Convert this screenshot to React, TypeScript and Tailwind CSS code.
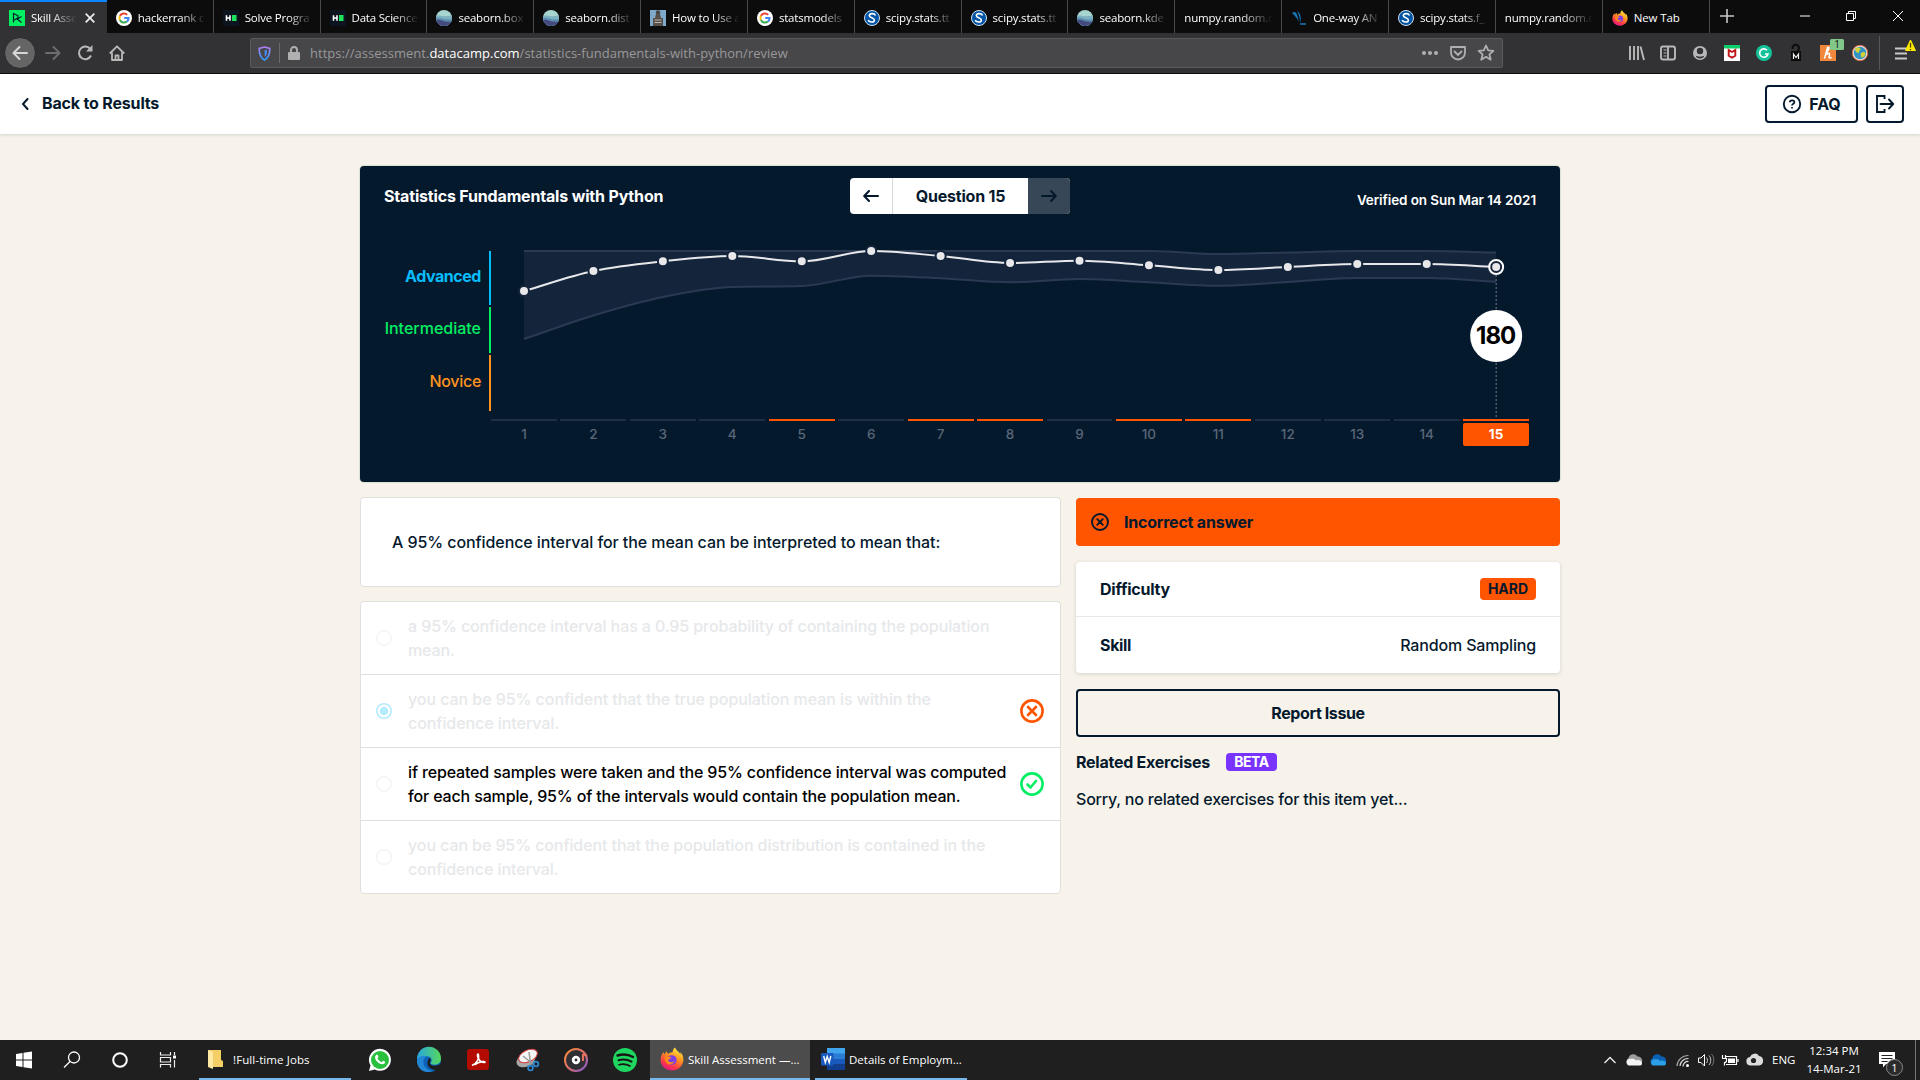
import React from "react";

type Kind = "dc" | "google" | "hr" | "seaborn" | "statue" | "scipy" | "wave" | "firefox" | "none";

const TABS: { icon: Kind; label: string }[] = [
  { icon: "dc", label: "Skill Asse" },
  { icon: "google", label: "hackerrank c" },
  { icon: "hr", label: "Solve Progra" },
  { icon: "hr", label: "Data Science" },
  { icon: "seaborn", label: "seaborn.box" },
  { icon: "seaborn", label: "seaborn.dist" },
  { icon: "statue", label: "How to Use a" },
  { icon: "google", label: "statsmodels" },
  { icon: "scipy", label: "scipy.stats.tt" },
  { icon: "scipy", label: "scipy.stats.tt" },
  { icon: "seaborn", label: "seaborn.kde" },
  { icon: "none", label: "numpy.random.c" },
  { icon: "wave", label: "One-way AN" },
  { icon: "scipy", label: "scipy.stats.f_" },
  { icon: "none", label: "numpy.random.c" },
  { icon: "firefox", label: "New Tab" },
];

function Firefox({ className }: { className: string }) {
  return (
    <svg viewBox="0 0 24 24" className={className}>
      <defs>
        <linearGradient id="ffBody" x1="0.8" y1="0" x2="0.3" y2="1">
          <stop offset="0" stopColor="#fff14a" />
          <stop offset="0.4" stopColor="#ff9a1f" />
          <stop offset="0.75" stopColor="#ff3b47" />
          <stop offset="1" stopColor="#e31587" />
        </linearGradient>
      </defs>
      <path d="M15 .5c-1.6 1.4-2.4 3-2.3 4.8C10.500 5.200 9 6 8.200 7 7.500 6.600 7 5.600 7 4.300 5.800 5 5 6 4.500 7.300 4 6.900 3.600 6 3.500 5 1.600 7.300.6 10 .6 13 .6 19 5.700 23.500 12 23.500S23.400 18.700 23.400 12.500c0-3.500-1.500-6-3.200-7.500.3 1 .4 1.800.3 2.500C19.400 5 16.500 3.800 15 .5z" fill="url(#ffBody)" />
      <circle cx="11.800" cy="13" r="4.800" fill="#7a3fe6" />
      <path d="M5 10.500c2-1.500 4.500-1.300 6.500.3-1.200 1.200-3 1-3.500 2.500 1 2.500 4.500 2.500 6.500 1-1.500 4-7 4.500-9.200 0-.6-1.300-.7-2.500-.3-3.800z" fill="#ff8a16" />
    </svg>
  );
}

function Favicon({ kind }: { kind: Kind }) {
  switch (kind) {
    case "dc":
      return (
        <svg viewBox="0 0 16 16" className="h-4 w-4 shrink-0">
          <rect width="16" height="16" fill="#03ef62" />
          <path d="M4.500 12.500v-9l4.500 2.300v2L4.500 10.500M12.500 6.500L8.200 9l4.300 3.500" fill="none" stroke="#05192d" strokeWidth="1.100" />
        </svg>
      );
    case "google":
      return (
        <svg viewBox="0 0 16 16" className="h-4 w-4 shrink-0">
          <circle cx="8" cy="8" r="8" fill="#fff" />
          <g fill="none" strokeWidth="2">
            <path d="M11.200 4.700A4.600 4.600 0 0 0 3.900 6" stroke="#ea4335" />
            <path d="M3.900 6a4.600 4.600 0 0 0 0 4" stroke="#fbbc05" />
            <path d="M3.900 10a4.600 4.600 0 0 0 7 1.500" stroke="#34a853" />
            <path d="M10.900 11.500A4.500 4.500 0 0 0 12.600 8.100H8.200" stroke="#4285f4" />
          </g>
        </svg>
      );
    case "hr":
      return (
        <svg viewBox="0 0 16 16" className="h-4 w-4 shrink-0">
          <rect width="16" height="16" fill="#0c1420" />
          <path d="M3.500 5.200v5.600M7 5.200v5.600M3.500 8H7" stroke="#fff" strokeWidth="1.600" />
          <rect x="9" y="5" width="4.500" height="6" fill="#1ce25c" />
        </svg>
      );
    case "seaborn":
      return (
        <svg viewBox="0 0 16 16" className="h-4 w-4 shrink-0">
          <defs>
            <clipPath id="seaClip"><circle cx="8" cy="8" r="8" /></clipPath>
          </defs>
          <g clipPath="url(#seaClip)">
            <rect width="16" height="16" fill="#a9d5d0" />
            <path d="M0 6c4-2 8 2 16-1v11H0z" fill="#7db0c0" />
            <path d="M0 8c4-1 8 3 16 1v7H0z" fill="#5b8db0" />
            <path d="M0 10c5-1 8 3 16 1.500V16H0z" fill="#444a7e" />
          </g>
        </svg>
      );
    case "statue":
      return (
        <svg viewBox="0 0 16 16" className="h-4 w-4 shrink-0">
          <rect width="16" height="16" fill="#7ea9cb" />
          <circle cx="8" cy="2.500" r="2.200" fill="#4a4540" />
          <path d="M6 4h4l1 4h2v8H3V8h2z" fill="#57504a" />
          <path d="M4.500 10h7M4.500 12.500h7" stroke="#b9b2a8" />
        </svg>
      );
    case "scipy":
      return (
        <svg viewBox="0 0 16 16" className="h-4 w-4 shrink-0">
          <circle cx="8" cy="8" r="7.500" fill="#0054a6" stroke="#d5dfec" />
          <path d="M11.500 5.500C10.500 3 5.500 3 5.300 5.500 5.200 8 10.500 7.500 10.400 10.200 10.200 12.800 5.500 12.500 4 10.300" fill="none" stroke="#fff" strokeWidth="1.600" />
        </svg>
      );
    case "wave":
      return (
        <svg viewBox="0 0 16 16" className="h-4 w-4 shrink-0">
          <path d="M1 3c4-3 5 0 7 9-2-4-4-6-7-9zM6 1c4 2 4 7 3.500 12C8.500 8 8 4 6 1z" fill="#1677b9" />
          <path d="M9 14h6" stroke="#1677b9" strokeWidth="1.500" />
        </svg>
      );
    case "firefox":
      return <Firefox className="h-4 w-4 shrink-0" />;
    default:
      return null;
  }
}

function TabStrip() {
  return (
    <div className="flex h-[33px] bg-[#0c0c0d]">
      <div className="grid w-[1709.500px] shrink-0 grid-cols-16">
        {TABS.map((t, i) => (
          <div
            key={i}
            className={
              i === 0
                ? "flex min-w-0 items-center gap-1.5 border-t-2 border-[#0a84ff] bg-[#323234] pr-3 pl-[9px]"
                : "flex min-w-0 items-center gap-1.5 border-r border-[#4a4a4c] pt-0.5 pr-1 pl-[9px]"
            }
          >
            <Favicon kind={t.icon} />
            <span
              className={
                i === 15
                  ? "flex-1 text-[11.500px] tracking-[-0.1px] whitespace-nowrap"
                  : i === 0
                    ? "flex-1 mask-r-from-40% mask-r-to-95% text-[11.500px] tracking-[-0.25px] whitespace-nowrap"
                    : "flex-1 mask-r-from-60% mask-r-to-95% text-[11.500px] tracking-[-0.2px] whitespace-nowrap"
              }
            >
              {t.label}
            </span>
            {i === 0 && (
              <svg viewBox="0 0 10 10" className="h-2.5 w-2.5 shrink-0">
                <path d="M.7.7l8.600 8.600M9.300.7L.7 9.300" stroke="#eee" strokeWidth="1.700" />
              </svg>
            )}
          </div>
        ))}
      </div>
      <svg viewBox="0 0 210 33" className="h-[33px] w-[210px]" fill="none">
        <path d="M10 16h14M17 9v14" stroke="#c8c8c8" strokeWidth="1.600" />
        <path d="M90 16h10" stroke="#fff" />
        <path d="M136.500 13.500h7v7h-7zM138.500 13.500v-2h7v7h-2" stroke="#fff" />
        <path d="M183 11l10 10M193 11l-10 10" stroke="#fff" />
      </svg>
    </div>
  );
}

function Toolbar() {
  return (
    <div className="flex h-[41px] items-center border-b border-[#0c0c0d] bg-[#323234] text-[#b8b8b9]">
      <div className="ml-1 flex h-8 w-8 items-center justify-center rounded-full border border-[#29292b] bg-[#656566]">
        <svg viewBox="0 0 16 16" className="h-4 w-4" fill="none" stroke="#d6d6d6" strokeWidth="2" strokeLinecap="round" strokeLinejoin="round">
          <path d="M15 8H1.500M7.500 2l-6 6 6 6" />
        </svg>
      </div>
      <svg viewBox="0 0 16 16" className="ml-[9px] h-4 w-4" fill="none" stroke="#6d6d6f" strokeWidth="2" strokeLinecap="round" strokeLinejoin="round">
        <path d="M1 8h13.500M8.500 2l6 6-6 6" />
      </svg>
      <svg viewBox="0 0 16 16" className="ml-4 h-4 w-4" fill="none" stroke="currentColor" strokeWidth="2">
        <path d="M13.500 4.300A6.300 6.300 0 1 0 14 10.500" />
        <path d="M15.500 0v6.500H9z" fill="currentColor" stroke="none" />
      </svg>
      <svg viewBox="0 0 16 16" className="ml-4 h-4 w-4" fill="none" stroke="currentColor" strokeWidth="1.800" strokeLinejoin="round">
        <path d="M.8 8.500L8 1.300l7.200 7.200M3 7.500V15h10V7.500" />
        <path d="M6.500 15v-4.500h3V15" />
      </svg>
      <div className="ml-[125px] flex h-[30px] w-[1253px] items-center rounded-[2px] border border-[#5a5a5c] bg-[#474749]">
        <svg viewBox="0 0 14 16" className="ml-[7px] h-[15px] w-[13px]" fill="none">
          <defs>
            <linearGradient id="shield" x1="0" y1="0" x2="0" y2="1">
              <stop offset="0" stopColor="#b07cf5" />
              <stop offset="1" stopColor="#2b9cff" />
            </linearGradient>
          </defs>
          <path d="M7 1l5.700 1.600C12.800 8 11.500 12.500 7 15 2.500 12.500 1.200 8 1.300 2.600z" stroke="url(#shield)" strokeWidth="1.800" />
          <path d="M7.200 4v7.700c1.800-1.600 2.500-3.900 2.600-7z" fill="#4a8dff" />
        </svg>
        <div className="ml-2 h-5 w-px bg-[#6a6a6c]" />
        <svg viewBox="0 0 12 14" className="ml-2 h-3.5 w-3" fill="none">
          <rect y="6" width="12" height="8" rx="1" fill="#b0b0b1" />
          <path d="M3 6.500V4a3 3 0 0 1 6 0v2.500" stroke="#b0b0b1" strokeWidth="1.900" />
        </svg>
        <span className="ml-2.5 pt-0.5 text-[13px] tracking-[0.02px] text-[#98989a]">
          https://assessment.<span className="text-white">datacamp.com</span>/statistics-fundamentals-with-python/review
        </span>
        <svg viewBox="0 0 80 20" className="mr-0.5 ml-auto h-5 w-20" fill="none" stroke="#b0b0b1" strokeWidth="1.800">
          <g fill="#b0b0b1" stroke="none">
            <circle cx="4" cy="10" r="2" />
            <circle cx="10" cy="10" r="2" />
            <circle cx="16" cy="10" r="2" />
          </g>
          <path d="M31 4h14v5.500a7 7 0 0 1-14 0z" strokeLinejoin="round" />
          <path d="M34.500 8.500L38 12l3.500-3.500" strokeLinecap="round" />
          <path d="M66 2.500l2.200 4.900 5.200.5-4 3.500 1.300 5.300-4.700-2.900-4.700 2.900 1.300-5.300-4-3.500 5.200-.5z" strokeLinejoin="round" />
        </svg>
      </div>
      <Extensions />
    </div>
  );
}

function Extensions() {
  return (
    <svg viewBox="1503 33 416 40" className="h-10 w-[416px] shrink-0" fill="none">
      <g stroke="#b8b8b9" strokeWidth="1.900">
        <path d="M1630 46v14M1634 46v14M1638 46v14M1640.500 46.500l3.500 13.500" />
        <rect x="1661" y="46.500" width="14" height="13" rx="2" />
        <path d="M1668 46v14" />
        <path d="M1663.500 50h3M1663.500 53h3M1663.500 56h3" strokeWidth="1" />
      </g>
      <circle cx="1700" cy="53" r="7" fill="#b8b8b9" />
      <circle cx="1700" cy="51" r="3.200" fill="#323234" />
      <path d="M1695.500 55.500c1.200 1.500 7.800 1.500 9 0-1 4-8 4-9 0z" fill="#323234" />
      <rect x="1724" y="45" width="16" height="16" fill="#fff" />
      <rect x="1724" y="45" width="16" height="3.500" fill="#0fcf6b" />
      <path d="M1728.700 50l3.300 2 3.300-2v5.800l-3.300 1.800-3.300-1.800z" stroke="#c01818" strokeWidth="1.900" />
      <circle cx="1764" cy="53" r="8" fill="#15c39a" />
      <path d="M1767 50.200a4.200 4.200 0 1 0 1 3.800h-3" stroke="#fff" strokeWidth="1.600" />
      <path d="M1792.500 49v-1a3 3 0 0 1 6.500 0c0 2-1.500 2-1.500 4" stroke="#0b0b0b" strokeWidth="1.800" />
      <rect x="1791" y="51" width="10" height="10" fill="#0b0b0b" />
      <path d="M1793.500 59v-5l2.500 3.500 2.500-3.500v5" stroke="#eee" strokeWidth="1.200" />
      <rect x="1820" y="45" width="16" height="16" fill="#f0873a" />
      <path d="M1824.500 58.500l3-11c1.500-.5 2 .5 1 2l-3 5M1826 55c2-2.500 4-2.500 3.500 0l-.5 2.500c.5 1 2 .5 2.500-.5" stroke="#fff" strokeWidth="1.500" />
      <rect x="1830" y="39" width="14" height="11" rx="1.500" fill="#80c788" />
      <text x="1837" y="48" textAnchor="middle" fontSize="10" fill="#111">1</text>
      <circle cx="1860" cy="53" r="7" fill="#3493c5" stroke="#f0ead9" strokeWidth="1.500" />
      <circle cx="1860" cy="53" r="7.700" stroke="#d9603c" strokeWidth="0.900" />
      <path d="M1855 49c2-2 5-2 5.500 0-.5 2-2 1.500-1.500 4-2 0-4-1.500-4-4zM1861 53c2-2 5-1 4.500 1-.8 2.500-3 4-4 3.500-.8-1.500-1-3-.5-4.500z" fill="#d2d334" />
      <path d="M1879.500 36v34" stroke="#57575a" />
      <path d="M1895 48.500h12M1895 53.500h12M1895 58.500h12" stroke="#c8c8c9" strokeWidth="1.900" />
      <path d="M1910.500 40l5 10.500h-10z" fill="#ffe900" stroke="#ffe900" strokeLinejoin="round" />
      <path d="M1910.500 43v4.500M1910.500 49v1.300" stroke="#4a4200" strokeWidth="1.300" />
    </svg>
  );
}

function PageHeader() {
  return (
    <div className="flex h-[60px] items-center bg-white pr-4 pl-[21px] shadow-[0_1px_3px_rgba(5,25,45,0.15)]">
      <svg viewBox="0 0 8 12" className="h-3 w-2" fill="none" stroke="#05192d" strokeWidth="2" strokeLinecap="round">
        <path d="M6.500 1L2 6l4.500 5" />
      </svg>
      <span className="ml-[13px] pb-0.5 text-base font-bold tracking-[-0.17px]">Back to Results</span>
      <div className="ml-auto flex h-[38px] w-[93px] items-center justify-center gap-[7px] rounded border-2 border-[#05192d]">
        <svg viewBox="0 0 20 20" className="h-5 w-5 shrink-0" fill="none" stroke="#05192d" strokeWidth="1.900">
          <circle cx="10" cy="10" r="8.200" />
          <path d="M7.800 8.300c0-2.700 4.600-2.700 4.600 0C12.400 9.800 10 9.800 10 11.500M10 13v1.600" strokeWidth="1.700" />
        </svg>
        <span className="text-base font-bold tracking-[-0.1px]">FAQ</span>
      </div>
      <div className="ml-2 flex h-[38px] w-[38px] items-center justify-center rounded border-2 border-[#05192d]">
        <svg viewBox="0 0 20 20" className="h-5 w-5" fill="none" stroke="#05192d" strokeWidth="1.900">
          <path d="M9.500 5V2H2v16h7.500v-3" />
          <path d="M5.500 10H18M14 5.500l4.200 4.500L14 14.500" strokeLinecap="round" strokeLinejoin="round" />
        </svg>
      </div>
    </div>
  );
}

const STEP = 69.44;
const X0 = 164;
const SCORE = [291, 271, 261.3, 256, 261.3, 251, 256, 263, 260.7, 265.3, 270, 267, 264, 264, 267];
const LOWER = [339, 315.5, 297, 287, 286, 275.7, 278.3, 282.3, 279, 282.3, 285.7, 282, 278, 278, 281.7];
const UPPER = [251, 251, 251, 251, 251, 251, 251, 251, 251, 251, 254, 252.5, 251, 251, 252.5];
const WRONG = [5, 7, 8, 10, 11, 15];

const px = (i: number) => X0 + i * STEP;

/* Monotone cubic curve through evenly spaced values. */
function curve(v: number[]) {
  const s = v.slice(1).map((y, i) => (y - v[i]) / STEP);
  const m = v.map((_, i) => {
    if (i === 0) return s[0];
    if (i === v.length - 1) return s[i - 1];
    const a = s[i - 1];
    const b = s[i];
    if (a * b <= 0) return 0;
    return Math.sign(a) * Math.min(Math.abs(a), Math.abs(b), Math.abs(a + b) / 4) * 2;
  });
  let d = `M${px(0)} ${v[0]}`;
  for (let i = 1; i < v.length; i++) {
    const k = STEP / 3;
    d += `C${px(i - 1) + k} ${v[i - 1] + m[i - 1] * k} ${px(i) - k} ${v[i] - m[i] * k} ${px(i)} ${v[i]}`;
  }
  return d;
}

function Band() {
  const up = curve(UPPER);
  const low = curve(LOWER);
  return (
    <svg viewBox="131 240 1069 180" className="h-[180px] w-[1069px] shrink-0" fill="none">
      <defs>
        <mask id="belowLower">
          <rect x="0" y="240" width="1200" height="180" fill="#fff" />
          <path d={low + `V420H${px(0)}Z`} fill="#000" />
        </mask>
      </defs>
      <path d={up + `V345H${px(0)}Z`} fill="#14253b" mask="url(#belowLower)" />
      <path d={up} stroke="#2b3a52" strokeWidth="2" />
      <path d={low} stroke="#2b3a52" strokeWidth="2" />
      <path d={`M${px(14)} 275V420`} stroke="#6f7b89" strokeDasharray="2 2" />
      <path d={curve(SCORE)} stroke="#e8e8ea" strokeWidth="2" />
      {SCORE.map((y, i) => (
        <circle key={i} cx={px(i)} cy={y} r="5" fill="#e8e8ea" stroke="#14253b" strokeWidth="2" />
      ))}
      <circle cx={px(14)} cy={267} r="7" stroke="#fff" strokeWidth="2" />
      <circle cx={px(14)} cy={336} r="26" fill="#fff" />
      <text x={px(14) - 0.5} y="344" textAnchor="middle" fontSize="24" fontWeight="700" fill="#000" letterSpacing="-1" fontFamily="Inter">180</text>
    </svg>
  );
}

function ChartPanel() {
  return (
    <div className="h-[316px] rounded bg-[#05192d] text-white shadow-[0_0_1px_1px_rgba(5,80,60,0.12)]">
      <div className="grid h-[74px] grid-cols-3 items-start px-6 pt-3">
        <span className="pt-1.5 text-base font-bold tracking-[-0.17px] whitespace-nowrap">Statistics Fundamentals with Python</span>
        <div className="flex h-9 w-[220px] justify-self-center overflow-hidden rounded bg-white text-[#05192d]">
          <div className="flex w-[43px] items-center justify-center border-r border-[#d5d9dd]">
            <svg viewBox="0 0 16 12" className="h-3 w-4" fill="none" stroke="#05192d" strokeWidth="2" strokeLinecap="round" strokeLinejoin="round">
              <path d="M15 6H1.500M6 1L1.200 6 6 11" />
            </svg>
          </div>
          <div className="flex flex-1 items-center justify-center text-base font-bold tracking-[-0.22px]">Question 15</div>
          <div className="flex w-[42px] items-center justify-center bg-[#374757]">
            <svg viewBox="0 0 16 12" className="h-3 w-4" fill="none" stroke="#05192d" strokeWidth="2" strokeLinecap="round" strokeLinejoin="round">
              <path d="M1 6h13.500M10 1l4.800 5L10 11" />
            </svg>
          </div>
        </div>
        <span className="justify-self-end pt-3 text-[13.500px] font-semibold tracking-[-0.1px]">Verified on Sun Mar 14 2021</span>
      </div>
      <div className="flex h-[180px]">
        <div className="flex w-[131px] flex-col gap-0.5 pt-[11px] text-right">
          <div className="flex h-[54px] items-center justify-end border-r-2 border-[#06bdfc] pr-2 pb-1 text-base font-bold tracking-[-0.45px] text-[#06bdfc]">Advanced</div>
          <div className="flex h-[46px] items-center justify-end border-r-2 border-[#03ef62] pr-2 pb-1 text-base font-medium tracking-[0px] text-[#03ef62]">Intermediate</div>
          <div className="flex h-[56px] items-center justify-end border-r-2 border-[#ff931e] pr-2 pb-1 text-base font-medium tracking-[-0.3px] text-[#ff931e]">Novice</div>
        </div>
        <Band />
      </div>
      <div className="-mt-px ml-[131px] flex w-[1041.600px]">
        {SCORE.map((_, i) => {
          const n = i + 1;
          return (
            <div key={n} className="flex flex-1 flex-col gap-0.5 pr-[3.500px]">
              <div className={WRONG.includes(n) ? "h-0.5 bg-[#ff5400]" : "h-0.5 bg-[#1f2f43]"} />
              <div
                className={
                  n === 15
                    ? "flex h-[23px] items-center justify-center rounded-xs bg-[#ff5400] pb-px text-[13.500px] font-bold text-white"
                    : "flex h-[23px] items-center justify-center pb-px text-[13.500px] font-medium text-[#596778]"
                }
              >
                {n}
              </div>
            </div>
          );
        })}
      </div>
    </div>
  );
}

type Option = { lines: [string, string]; state: "plain" | "wrong" | "right"; faded: boolean; track: string };
const OPTIONS: Option[] = [
  { lines: ["a 95% confidence interval has a 0.95 probability of containing the population", "mean."], state: "plain", faded: true, track: "tracking-[-0.1px]" },
  { lines: ["you can be 95% confident that the true population mean is within the", "confidence interval."], state: "wrong", faded: true, track: "tracking-[-0.06px]" },
  { lines: ["if repeated samples were taken and the 95% confidence interval was computed", "for each sample, 95% of the intervals would contain the population mean."], state: "right", faded: false, track: "tracking-[-0.15px]" },
  { lines: ["you can be 95% confident that the population distribution is contained in the", "confidence interval."], state: "plain", faded: true, track: "tracking-[-0.09px]" },
];

function OptionRow({ o }: { o: Option }) {
  return (
    <div className="flex h-[73px] items-center border-b border-[#dfdfdc] pl-[15px] last:h-[72px] last:border-b-0">
      <svg viewBox="0 0 16 16" className="h-4 w-4 shrink-0" fill="none">
        {o.state === "wrong" ? (
          <>
            <circle cx="8" cy="8" r="7.200" stroke="#b4ebfe" strokeWidth="1.600" />
            <circle cx="8" cy="8" r="4.300" fill="#b4ebfe" />
          </>
        ) : (
          <circle cx="8" cy="8" r="7.300" stroke="#f3f3f4" strokeWidth="1.400" />
        )}
      </svg>
      <div className={`ml-4 w-[610px] shrink-0 leading-6 whitespace-nowrap ${o.track} ${o.faded ? "font-medium text-[#e6e8ea]" : "font-medium text-black"}`}>
        <div>{o.lines[0]}</div>
        <div>{o.lines[1]}</div>
      </div>
      {o.state !== "plain" && (
        <svg viewBox="0 0 24 24" className="ml-0.5 h-6 w-6" fill="none" stroke={o.state === "wrong" ? "#ff5400" : "#03ef62"} strokeWidth="2.600" strokeLinecap="round" strokeLinejoin="round">
          <circle cx="12" cy="12" r="10.600" />
          {o.state === "wrong" ? <path d="M8 8l8 8M16 8l-8 8" /> : <path d="M7.500 12.500l3 3 5.500-6.500" />}
        </svg>
      )}
    </div>
  );
}

function Sidebar() {
  return (
    <div className="flex w-[484px] flex-col">
      <div className="mt-px flex h-12 items-center rounded bg-[#ff5400] pl-[15px]">
        <svg viewBox="0 0 18 18" className="h-[18px] w-[18px]" fill="none" stroke="#05192d" strokeWidth="1.900" strokeLinecap="round">
          <circle cx="9" cy="9" r="8" />
          <path d="M6.200 6.200l5.600 5.600M11.800 6.200l-5.600 5.600" />
        </svg>
        <span className="ml-[15px] font-bold tracking-[-0.22px]">Incorrect answer</span>
      </div>
      <div className="mt-4 h-[111px] rounded bg-white shadow-[0_1px_4px_rgba(5,25,45,0.15)]">
        <div className="flex h-[55px] items-center justify-between border-b border-[#e6e8ea] px-6">
          <span className="font-bold tracking-[-0.22px]">Difficulty</span>
          <span className="flex h-[22px] w-14 items-center justify-center rounded bg-[#ff5400] text-sm font-bold">HARD</span>
        </div>
        <div className="flex h-14 items-center justify-between px-6">
          <span className="font-bold tracking-[-0.35px]">Skill</span>
          <span className="font-medium tracking-[-0.16px]">Random Sampling</span>
        </div>
      </div>
      <div className="mt-4 flex h-12 items-center justify-center rounded border-2 border-[#05192d] font-bold tracking-[-0.4px]">Report Issue</div>
      <div className="mt-3 flex h-[26px] items-center">
        <span className="w-[150px] font-bold tracking-[-0.25px]">Related Exercises</span>
        <span className="flex h-[18px] w-[51px] items-center justify-center rounded bg-[#7933ff] text-sm font-bold tracking-[-0.5px] text-white">BETA</span>
      </div>
      <div className="mt-3 font-medium tracking-[-0.21px]">Sorry, no related exercises for this item yet...</div>
    </div>
  );
}

function AppIcons() {
  return (
    <svg viewBox="356 1040 294 40" className="h-10 w-[294px] shrink-0" fill="none">
      <defs>
        <linearGradient id="edgeTop" x1="0" y1="0" x2="1" y2="0">
          <stop offset="0" stopColor="#2ba7df" />
          <stop offset="1" stopColor="#55d85b" />
        </linearGradient>
        <linearGradient id="groove" x1="0" y1="0" x2="1" y2="1">
          <stop offset="0" stopColor="#f58a3a" />
          <stop offset="0.500" stopColor="#e0706a" />
          <stop offset="1" stopColor="#8058d8" />
        </linearGradient>
      </defs>
      <path d="M369 1071l1.500-5.500a11 11 0 1 1 4.200 4z" fill="#fff" />
      <circle cx="380" cy="1060" r="9" fill="#28c03d" />
      <path d="M376 1055c1.500-1.500 2 .5 2.500 2l-1 1.500c1 2 2.500 3 4 3.700l1.500-1.500c1.500.5 3 1 1.800 2.500-1.300 1.500-3.500 1.300-5.800 0-2.500-1.700-5.500-5.300-3-8.200z" fill="#fff" />
      <circle cx="429" cy="1060" r="12" fill="#0c62b8" />
      <path d="M417 1059a12 12 0 0 1 24-.5c.2 4.500-4 7-8.500 6-2-.7-2.500-1.500-1.500-2.500 1.500-2 .5-5-3-5.500-4-.5-8 .5-11 2.500z" fill="url(#edgeTop)" />
      <path d="M417 1060c2-4 7-5 10-3.500-4 1-5 7-1.500 11 2 2.500 5 3.500 7.500 3.500-8 3.500-16.500-2-16-11z" fill="#2387d6" />
      <path d="M429.500 1058c1.500.8 1.800 2.500.6 4-1 1.800 1 3.500 4 3.700 3 .1 5.500-.8 8-3.200l1 4.500-3.500 2.500c-1 .5-3 .8-5.500.3-6-.8-9-7-4.600-11.800z" fill="#1e1e1e" />
      <rect x="467" y="1049" width="22" height="21" rx="3" fill="#b30b00" />
      <path d="M472 1065.500c5-2 8-8 6-11.500-1.800.5 1 9 6.500 8.500 2.500-1.500-5-1.500-10 2.300" stroke="#fff" strokeWidth="1.600" />
      <ellipse cx="526" cy="1060" rx="10" ry="6.500" transform="rotate(-25 526 1060)" fill="#a7a7a7" />
      <ellipse cx="528" cy="1056" rx="10" ry="5.800" transform="rotate(-25 528 1056)" fill="#f5f5f5" stroke="#d23c3c" />
      <path d="M523 1056l11 9M529 1052l2 14" stroke="#999" strokeWidth="1.500" />
      <circle cx="530.500" cy="1068" r="2.400" stroke="#2b86cf" strokeWidth="1.700" />
      <circle cx="536" cy="1064" r="2.400" stroke="#2b86cf" strokeWidth="1.700" />
      <circle cx="576" cy="1060" r="11" stroke="url(#groove)" strokeWidth="2" fill="#303034" />
      <circle cx="576" cy="1060" r="2.800" stroke="#fff" strokeWidth="2.800" />
      <path d="M583 1054v7M583 1054l4 2" stroke="#e8705a" strokeWidth="2" />
      <circle cx="625" cy="1060" r="12" fill="#1ed760" />
      <g stroke="#191414" strokeLinecap="round">
        <path d="M617.500 1055.500c5-1.500 11-1 15.500 1.500" strokeWidth="2.400" />
        <path d="M618.500 1060.300c4.500-1.300 9-.8 13 1.300" strokeWidth="2" />
        <path d="M619 1064.700c4-1 7.500-.6 11 1.200" strokeWidth="1.700" />
      </g>
    </svg>
  );
}

function Tray() {
  return (
    <svg viewBox="1600 1040 170 40" className="h-10 w-[170px] shrink-0" fill="none">
      <path d="M1604.500 1063l5.500-5.500 5.500 5.500" stroke="#eee" strokeWidth="1.300" />
      <g transform="translate(-1.500 0)">
        <path d="M1630 1065a4 4 0 0 1 0-7 5 5 0 0 1 9-1.500 4 4 0 0 1 1 8.500z" fill="#9b9b9b" />
        <path d="M1630 1065.500a3.500 3.500 0 0 1 .5-6.500c3 0 4.500-1 7 1.500 2-1 6 0 6 2.500s-1.500 2.500-2.500 2.500z" fill="#f3f3f3" />
        <path d="M1654 1065a4 4 0 0 1 0-7 5 5 0 0 1 9-1.500 4 4 0 0 1 1 8.500z" fill="#0b62b5" />
        <path d="M1654 1065.500a3.500 3.500 0 0 1 .5-6c3 0 4.500-1 7 1.500 2-1 6 0 6 2.200s-1.500 2.300-2.500 2.300z" fill="#2c9fe8" />
      </g>
      <path d="M1677 1066a11 11 0 0 1 11.500-10.500" stroke="#aaa" strokeWidth="1.200" />
      <path d="M1680 1066a8 8 0 0 1 8.500-7.500M1683 1066.500a5 5 0 0 1 5.500-5" stroke="#ddd" strokeWidth="1.200" />
      <circle cx="1687.500" cy="1065.500" r="1.500" fill="#fff" />
      <path d="M1698.500 1058h2.500l3.500-3.500v11.500l-3.500-3.500h-2.500z" stroke="#fff" />
      <path d="M1706.500 1057.500c1.300 1.500 1.300 4 0 5.500M1709 1055.500c2.300 2.500 2.300 7 0 9.500" stroke="#ccc" />
      <path d="M1711.500 1054c3 3.500 3 9 0 12" stroke="#777" />
      <path d="M1726 1056.500h10.500v8H1726M1738 1059v3M1722.500 1055v3M1725.500 1055v3M1722 1058.500h4.500v2c0 2-2 2-2 2v3" stroke="#fff" strokeWidth="1.200" />
      <rect x="1728" y="1058.500" width="7" height="4.500" fill="#fff" />
      <path d="M1750 1065.500a4.300 4.300 0 0 1 0-8.500 5 5 0 0 1 9-1 4.800 4.800 0 0 1 0 9.500z" fill="#dcdcdc" />
      <circle cx="1753.500" cy="1060.500" r="2.600" fill="#222" />
    </svg>
  );
}

function Taskbar() {
  return (
    <div className="flex h-10 bg-[#1f1f1f] text-[11.500px] text-white">
      <svg viewBox="0 0 199 40" className="h-10 w-[199px] shrink-0" fill="none">
        <path d="M16 14l6.500-1v6.500H16zM23.500 12.800l8.500-1.200v7.900h-8.500zM16 20.500h6.500V27L16 26zM23.500 20.500H32v7.900l-8.500-1.200z" fill="#fff" />
        <circle cx="74" cy="17.500" r="5.500" stroke="#fff" strokeWidth="1.300" />
        <path d="M70 21.500l-6 6" stroke="#fff" strokeWidth="1.300" />
        <circle cx="120" cy="20" r="6.800" stroke="#fff" strokeWidth="2" />
        <path d="M160.500 12v3h10v-3M160.500 27.500v-3h10v3M160.500 17.500h10v4.500h-10zM174.500 12v3M174.500 20v7.500" stroke="#eee" strokeWidth="1.200" />
        <rect x="173" y="15.500" width="3" height="3" fill="#fff" />
      </svg>
      <div className="flex w-[152px] items-center border-b-2 border-[#76b9ed] pl-[9px]">
        <svg viewBox="0 0 15 20" className="h-5 w-[15px]">
          <path d="M0 1h13v10l2 1v6H0z" fill="#f4cf66" />
          <path d="M0 1l5 2v17l-5-2z" fill="#ffe9a2" />
        </svg>
        <span className="ml-2.5 pt-0.5 tracking-[0.1px]">!Full-time Jobs</span>
      </div>
      <div className="w-[5px]" />
      <AppIcons />
      <div className="flex w-40 items-center border-b-2 border-[#76b9ed] bg-[#4c4c4c] pl-2.5">
        <Firefox className="h-6 w-6 shrink-0" />
        <span className="ml-1 pt-0.5 whitespace-nowrap">Skill Assessment —...</span>
      </div>
      <div className="ml-[5px] flex w-[152px] items-center border-b-2 border-[#76b9ed] pl-1.5">
        <svg viewBox="0 0 24 22" className="h-[22px] w-6 shrink-0" fill="none">
          <rect x="6" width="18" height="6" fill="#41a5ee" />
          <rect x="6" y="5.500" width="18" height="5.500" fill="#2b7cd3" />
          <rect x="6" y="11" width="18" height="5.500" fill="#185abd" />
          <rect x="6" y="16.500" width="18" height="5.500" fill="#103f91" />
          <rect y="5" width="12.500" height="12.500" rx="1" fill="#185abd" />
          <path d="M2.700 8l1.600 6.500L6.200 8.500l2 6L9.800 8" stroke="#fff" strokeWidth="1.400" />
        </svg>
        <span className="ml-1 pt-0.5 whitespace-nowrap">Details of Employm...</span>
      </div>
      <div className="ml-auto flex">
        <Tray />
        <span className="w-[30px] self-center pl-0.5">ENG</span>
        <div className="flex w-[68px] flex-col items-center justify-center leading-[18px]">
          <span>12:34 PM</span>
          <span>14-Mar-21</span>
        </div>
        <svg viewBox="1868 1040 52 40" className="h-10 w-[52px]" fill="none">
          <path d="M1879 1052h16v12h-9l-3 3.500v-3.500h-4z" fill="#fff" />
          <path d="M1881.500 1055.500h11M1881.500 1058.500h11M1881.500 1061.500h6" stroke="#222" />
          <circle cx="1894.500" cy="1067.500" r="8" fill="#2b2b2b" stroke="#8a8a8a" />
          <text x="1894.500" y="1071.500" textAnchor="middle" fontSize="11" fill="#fff">1</text>
          <path d="M1915.500 1040v40" stroke="#777" />
        </svg>
      </div>
    </div>
  );
}

export default function App() {
  return (
    <div className="flex h-[1080px] w-[1920px] flex-col overflow-hidden bg-[#f7f3eb] font-['Open_Sans',sans-serif] text-white">
      <TabStrip />
      <Toolbar />
      <div className="flex-1 font-[Inter,sans-serif] text-[#05192d]">
        <PageHeader />
        <main className="mx-auto mt-8 w-[1200px]">
          <ChartPanel />
          <div className="mt-[15px] flex items-start justify-between">
            <div className="w-[701px]">
              <div className="flex h-[90px] items-center rounded border border-[#dfdfdc] bg-white pl-[31px] font-medium tracking-[-0.08px]">
                A 95% confidence interval for the mean can be interpreted to mean that:
              </div>
              <div className="mt-3.5 rounded border border-[#dfdfdc] bg-white">
                {OPTIONS.map((o) => (
                  <OptionRow key={o.lines[0]} o={o} />
                ))}
              </div>
            </div>
            <Sidebar />
          </div>
        </main>
      </div>
      <Taskbar />
    </div>
  );
}
